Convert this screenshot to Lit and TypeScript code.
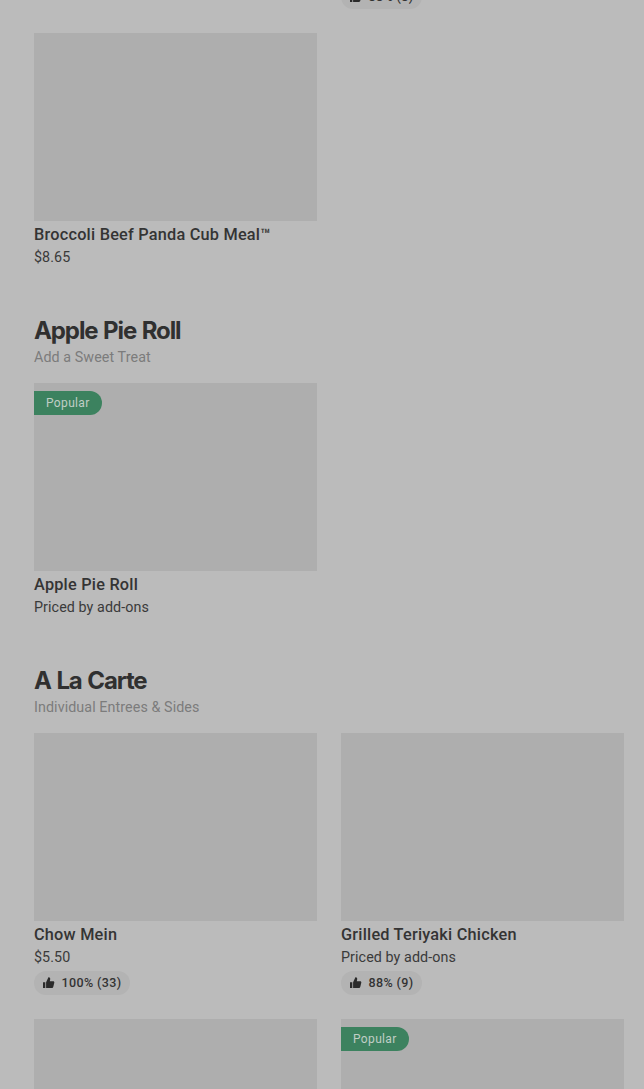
import { LitElement, html, css, svg, nothing } from "lit";
import { customElement, property } from "lit/decorators.js";

interface MenuItem {
  name?: string;
  price?: string;
  rating?: string;
  popular?: boolean;
}

interface MenuSection {
  title: string;
  subtitle: string;
  items: MenuItem[];
}

const sections: MenuSection[] = [
  {
    title: "Apple Pie Roll",
    subtitle: "Add a Sweet Treat",
    items: [{ name: "Apple Pie Roll", price: "Priced by add-ons", popular: true }],
  },
  {
    title: "A La Carte",
    subtitle: "Individual Entrees & Sides",
    items: [
      { name: "Chow Mein", price: "$5.50", rating: "100% (33)" },
      { name: "Grilled Teriyaki Chicken", price: "Priced by add-ons", rating: "88% (9)" },
      {},
      { popular: true },
    ],
  },
];

const thumb = svg`<path d="M0 5.3h2.3V11H0zM3.1 5.2 5.2.7C5.3.4 5.6.2 5.9.3c1 .2 1.5 1 1.3 2L6.8 4.2h3.3c.9 0 1.4.7 1.2 1.5l-1 4.1c-.2.8-.7 1.2-1.5 1.2H3.1z"/>`;

@customElement("rating-pill")
export class RatingPill extends LitElement {
  @property() label = "";

  static styles = css`
    :host {
      display: flex;
      align-items: center;
      justify-self: start;
      align-self: flex-start;
      box-sizing: border-box;
      height: 24px;
      padding: 0 8px 0 9px;
      gap: 6.5px;
      border-radius: 12px;
      background: #b3b3b3;
      color: #333333;
      font-size: 12.5px;
      font-weight: 500;
      line-height: 24px;
      letter-spacing: 0.4px;
      white-space: nowrap;
    }
    svg {
      width: 12px;
      height: 12px;
      fill: #2b2b2b;
    }
  `;

  render() {
    return html`
      <svg viewBox="0 0 12 12">${thumb}</svg>
      <span>${this.label}</span>
    `;
  }
}

@customElement("menu-card")
export class MenuCard extends LitElement {
  @property({ attribute: false }) item: MenuItem = {};

  static styles = css`
    :host {
      display: flex;
      flex-direction: column;
    }
    .photo {
      height: 188px;
      padding-top: 8px;
      box-sizing: border-box;
      background: #aeaeae;
    }
    .badge {
      width: 68px;
      height: 24px;
      padding-left: 12px;
      box-sizing: border-box;
      border-radius: 0 12px 12px 0;
      background: #3c825f;
      color: #c0cec6;
      font-size: 12px;
      line-height: 24px;
      letter-spacing: 0.35px;
    }
    .name {
      margin-top: 2px;
      font-size: 16.3px;
      font-weight: 500;
      line-height: 24px;
      letter-spacing: 0.22px;
      color: #343434;
      white-space: nowrap;
    }
    .price {
      margin-bottom: 4px;
      font-size: 14.3px;
      line-height: 20px;
      letter-spacing: 0.08px;
      color: #3a3a3a;
    }
  `;

  render() {
    const { name, price, rating, popular } = this.item;
    return html`
      <div class="photo">
        ${popular ? html`<div class="badge">Popular</div>` : nothing}
      </div>
      ${name ? html`<div class="name">${name}</div>` : nothing}
      ${price ? html`<div class="price">${price}</div>` : nothing}
      ${rating ? html`<rating-pill .label=${rating}></rating-pill>` : nothing}
    `;
  }
}

@customElement("app-root")
export class AppRoot extends LitElement {
  static styles = css`
    :host {
      display: block;
      height: 1089px;
      overflow: hidden;
      box-sizing: border-box;
      padding: 0 20px 0 34px;
      background: #bbbbbb;
      color: #303030;
      font-family: Roboto, "Liberation Sans", sans-serif;
    }
    .grid {
      display: grid;
      grid-template-columns: 1fr 1fr;
      gap: 24px;
    }
    .first {
      margin-top: -15px;
    }
    .first rating-pill {
      grid-column: 2;
    }
    section {
      margin-top: 44px;
    }
    h2 {
      margin: 0;
      font-family: Inter, sans-serif;
      font-size: 24px;
      font-weight: 700;
      line-height: 32px;
      letter-spacing: -1.1px;
      word-spacing: 1px;
    }
    .subtitle {
      margin: 0 0 16px;
      font-size: 14.3px;
      line-height: 20px;
      letter-spacing: 0.08px;
      color: #7c7c7c;
    }
  `;

  render() {
    return html`
      <div class="grid first">
        <rating-pill label="88% (8)"></rating-pill>
        <menu-card .item=${{ name: "Broccoli Beef Panda Cub Meal™", price: "$8.65" }}></menu-card>
      </div>
      ${sections.map(
        (section) => html`
          <section>
            <h2>${section.title}</h2>
            <p class="subtitle">${section.subtitle}</p>
            <div class="grid">
              ${section.items.map((item) => html`<menu-card .item=${item}></menu-card>`)}
            </div>
          </section>
        `
      )}
    `;
  }
}
